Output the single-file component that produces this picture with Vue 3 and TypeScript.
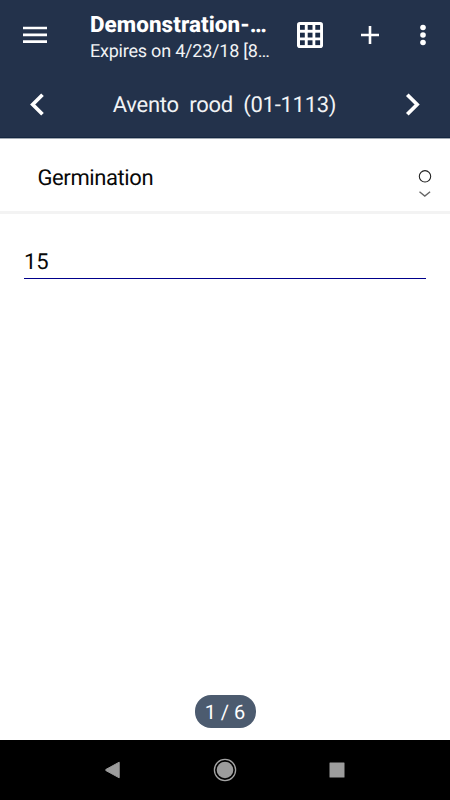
<script setup lang="ts">
import { ref } from 'vue'

const title = ref('Demonstration-…')
const subtitle = ref('Expires on 4/23/18 [8…')
const plot = ref('Avento  rood  (01-1113)')
const trait = ref('Germination')
const value = ref('15')
const page = ref(1)
const total = 6
const cells = [3, 10.7, 18.3]
</script>

<template>
  <div class="screen">
    <header class="header">
      <div class="toolbar">
        <button class="icon menu" aria-label="Menu">
          <svg width="24" height="18" viewBox="0 0 24 18"><path d="M0 2h24M0 8.8h24M0 15.6h24" stroke="#fff" stroke-width="2.7" /></svg>
        </button>
        <div class="heading">
          <h1 class="title">{{ title }}</h1>
          <p class="subtitle">{{ subtitle }}</p>
        </div>
        <button class="icon grid" aria-label="Grid">
          <svg width="26" height="26" viewBox="0 0 26 26">
            <rect width="26" height="26" rx="2.8" fill="#fff" />
            <g fill="#1b2b46">
              <template v-for="y in cells" :key="y">
                <rect v-for="x in cells" :key="x" :x="x" :y="y" width="4.8" height="4.8" />
              </template>
            </g>
          </svg>
        </button>
        <button class="icon add" aria-label="Add">
          <svg width="18" height="18" viewBox="0 0 18 18"><path d="M9 0v18M0 9h18" stroke="#fff" stroke-width="2.6" /></svg>
        </button>
        <button class="icon more" aria-label="More">
          <svg width="6" height="22" viewBox="0 0 6 22" fill="#fff"><circle cx="3" cy="3.5" r="2.8" /><circle cx="3" cy="11" r="2.8" /><circle cx="3" cy="18.5" r="2.8" /></svg>
        </button>
      </div>
      <div class="plot-nav">
        <button class="icon" aria-label="Previous">
          <svg width="15" height="23" viewBox="0 0 15 23"><path d="M13.5 1.7 3.7 11.5l9.8 9.8" fill="none" stroke="#fff" stroke-width="3.7" /></svg>
        </button>
        <span class="plot">{{ plot }}</span>
        <button class="icon" aria-label="Next">
          <svg width="15" height="23" viewBox="0 0 15 23"><path d="m2.3 1.7 9.8 9.8-9.8 9.8" fill="none" stroke="#fff" stroke-width="3.7" /></svg>
        </button>
      </div>
    </header>

    <section class="trait">
      <span class="trait-name">{{ trait }}</span>
      <span class="trait-state">
        <svg width="14" height="28" viewBox="0 0 14 28" fill="none">
          <circle cx="7" cy="7.3" r="5.7" stroke="#222" stroke-width="1.1" />
          <path d="m1.5 22.8 5.3 4.2 5.3-4.2" stroke="#666" stroke-width="1.4" />
        </svg>
      </span>
    </section>

    <main class="content">
      <div class="field">{{ value }}</div>
      <div class="pager">{{ page }} / {{ total }}</div>
    </main>

    <nav class="system-nav">
      <svg width="16" height="18" viewBox="0 0 16 18"><path d="M14.2 1.2v15.6L.8 9.5V8.5z" fill="#9c9c9c" stroke="#9c9c9c" stroke-width="1" stroke-linejoin="round" /></svg>
      <svg width="24" height="24" viewBox="0 0 24 24"><circle cx="12" cy="12" r="10.6" fill="none" stroke="#a4a4a4" stroke-width="1.3" /><circle cx="12" cy="12" r="8.3" fill="#9c9c9c" /></svg>
      <svg width="16" height="16" viewBox="0 0 16 16"><rect x=".5" y=".5" width="15" height="15" rx=".5" fill="#9c9c9c" /></svg>
    </nav>
  </div>
</template>

<style scoped>
.screen {
  display: flex;
  flex-direction: column;
  width: 450px;
  height: 800px;
  background: #fff;
  color: #080808;
  font-family: Roboto, "Liberation Sans", sans-serif;
  text-rendering: geometricPrecision;
  overflow: hidden;
}
.header {
  height: 138px;
  box-sizing: border-box;
  background: #23324b;
  border-bottom: 1px solid #142640;
  box-shadow: 0 1px 0 #a2a9b2;
  color: #fff;
}
.icon {
  display: flex;
  flex: none;
  padding: 0;
  border: 0;
  background: none;
}
svg { display: block; }
.toolbar {
  display: flex;
  align-items: center;
  height: 70px;
  padding: 0 24.5px 0 23px;
}
.heading {
  width: 190px;
  margin-left: 43px;
  padding-top: 5px;
  white-space: nowrap;
}
.title {
  margin: 0;
  font-size: 22.4px;
  line-height: 28px;
  font-weight: 800;
  letter-spacing: 0.08px;
}
.subtitle {
  margin: 0;
  font-size: 18px;
  line-height: 25px;
  letter-spacing: -0.22px;
  color: #f1f3f5;
}
.grid { margin-left: 17px; }
.add { margin-left: 38px; }
.more { margin-left: 40.5px; }
.plot-nav {
  display: flex;
  align-items: center;
  justify-content: space-between;
  height: 69px;
  padding: 0 30px 0 29px;
}
.plot {
  padding-top: 3px;
  font-size: 22px;
  line-height: 28px;
  letter-spacing: -0.27px;
  white-space: pre;
  color: #f1f3f5;
}
.trait {
  display: flex;
  align-items: center;
  justify-content: space-between;
  box-sizing: border-box;
  height: 76px;
  padding: 3px 18px 0 37.5px;
  border-bottom: 3px solid #f3f3f3;
}
.trait-name {
  padding-top: 6px;
  font-size: 22px;
  line-height: 28px;
  letter-spacing: -0.4px;
}
.trait-state { padding-top: 14px; }
.content {
  display: flex;
  flex: 1;
  flex-direction: column;
  justify-content: space-between;
  align-items: center;
  padding: 32px 24px 12px;
}
.field {
  align-self: stretch;
  height: 32px;
  border-bottom: 1px solid #00008b;
  font-size: 22px;
  line-height: 34px;
}
.pager {
  box-sizing: border-box;
  width: 61px;
  height: 33px;
  border-radius: 16px;
  background: #4c5b6f;
  color: #fff;
  font-size: 20px;
  line-height: 35px;
  text-align: center;
}
.system-nav {
  display: flex;
  flex: none;
  align-items: center;
  justify-content: space-between;
  height: 60px;
  padding: 0 105px;
  background: #000;
}
</style>
